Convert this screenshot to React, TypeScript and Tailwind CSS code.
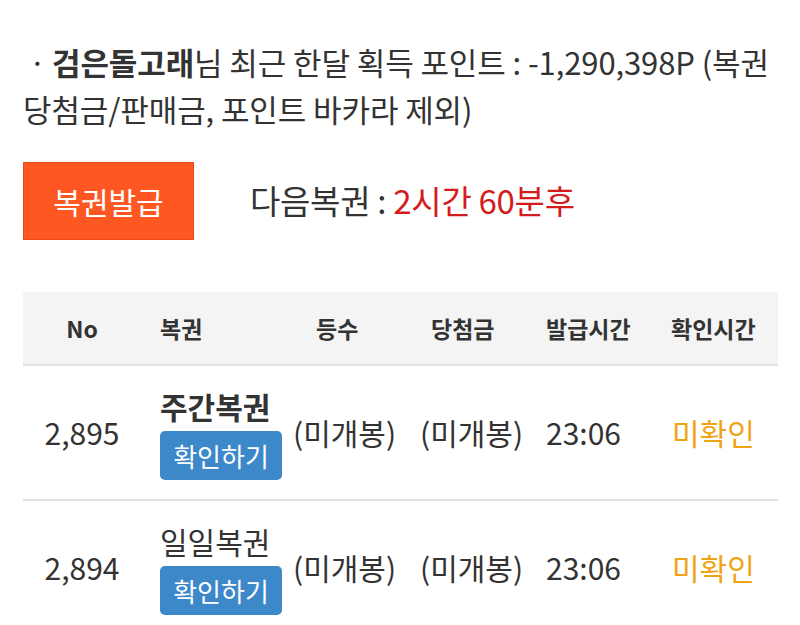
import React from "react";

type Row = {
  no: string;
  name: string;
  bold: boolean;
  rank: string;
  prize: string;
  issued: string;
  checked: string;
};

const rows: Row[] = [
  { no: "2,895", name: "주간복권", bold: true, rank: "(미개봉)", prize: "(미개봉)", issued: "23:06", checked: "미확인" },
  { no: "2,894", name: "일일복권", bold: false, rank: "(미개봉)", prize: "(미개봉)", issued: "23:06", checked: "미확인" },
];

const font = { fontFamily: '"Noto Sans CJK KR", "Noto Sans", sans-serif' };

export default function App() {
  return (
    <div className="w-[800px] h-[625px] overflow-hidden bg-white text-[#333]" style={font}>
      {/* Summary */}
      <div className="pt-[38px] pl-[23px] pr-[10px] text-[31px] leading-[47px] tracking-[-0.1px] whitespace-nowrap">
        <span className="inline-block w-[29px] text-center">·</span>
        <b className="font-bold">검은돌고래</b>님 최근 한달 획득 포인트 : -1,290,398P (복권
        <br />
        당첨금/판매금, 포인트 바카라 제외)
      </div>

      {/* Issue button + next */}
      <div className="mt-[30px] pl-[23px] flex items-center">
        <button className="w-[171px] h-[78px] bg-[#ff5722] border border-[#e84a1a] text-white text-[30px]">
          복권발급
        </button>
        <div className="ml-[56px] text-[33px] tracking-[-0.3px]">
          다음복권 : <span className="text-[#d41c1c]">2시간 60분후</span>
        </div>
      </div>

      {/* Table */}
      <div className="mt-[52px] ml-[23px] w-[755px]">
        <div className="grid grid-cols-[118px_149px_125px_125px_125px_113px] h-[74px] items-center bg-[#f4f4f4] border-b-2 border-[#e2e2e2] text-[23px] font-bold">
          <div className="text-center">No</div>
          <div className="pl-[19px]">복권</div>
          <div className="pl-[26px]">등수</div>
          <div className="pl-[16px]">당첨금</div>
          <div className="pl-[6px]">발급시간</div>
          <div className="pl-[6px]">확인시간</div>
        </div>
        {rows.map((r) => (
          <div
            key={r.no}
            className="grid grid-cols-[118px_149px_125px_125px_125px_113px] h-[135px] items-center border-b-2 border-[#e2e2e2] text-[30px]"
          >
            <div className="text-center">{r.no}</div>
            <div className="pl-[19px] flex flex-col items-start">
              <div className={r.bold ? "font-bold leading-[40px]" : "leading-[40px]"}>{r.name}</div>
              <button className="mt-[5px] w-[122px] h-[49px] rounded-[5px] bg-[#3d88c9] text-white text-[26px]">
                확인하기
              </button>
            </div>
            <div className="pl-[3px]">{r.rank}</div>
            <div className="pl-[5px]">{r.prize}</div>
            <div className="pl-[6px]">{r.issued}</div>
            <div className="pl-[7px] text-[#efa415]">{r.checked}</div>
          </div>
        ))}
      </div>
    </div>
  );
}
